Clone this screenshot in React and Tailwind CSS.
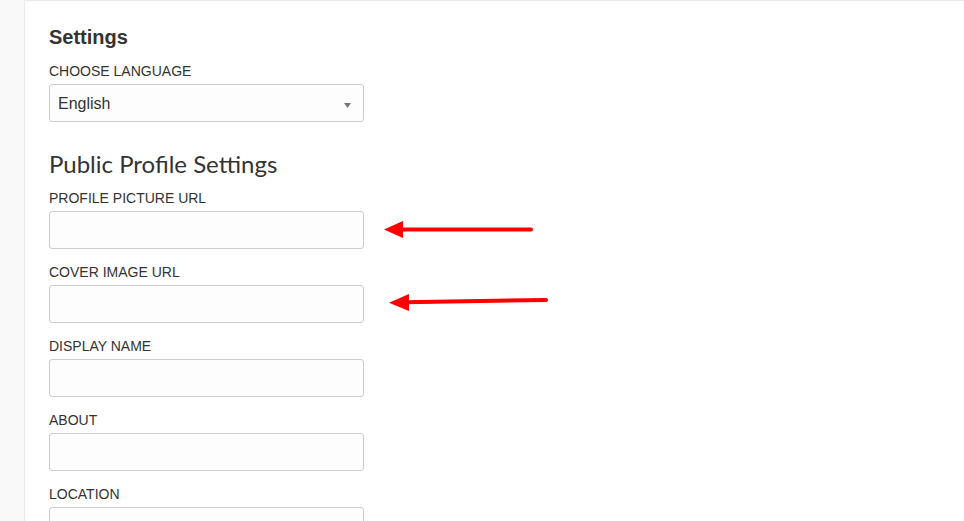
import React from 'react'

const fields = ['Profile Picture URL', 'Cover Image URL', 'Display Name', 'About', 'Location']

const Label = ({ children }) => (
  <label className="block text-[14px] leading-[18px] uppercase text-[#333] mb-[4px]">
    {children}
  </label>
)

const TextInput = () => (
  <input
    type="text"
    className="block w-[315px] h-[38px] border border-[#cccccc] rounded-[3px] bg-[#fdfdfd] px-[9px] outline-none"
  />
)

// red annotation arrows drawn over the form
const Arrows = () => (
  <svg
    className="absolute left-0 top-0 pointer-events-none"
    width="964"
    height="521"
    viewBox="0 0 964 521"
  >
    <line x1="531" y1="229.5" x2="400" y2="229.5" stroke="#ff0000" strokeWidth="4" strokeLinecap="round" />
    <polygon points="384,229.5 403,221 403,238" fill="#ff0000" />
    <line x1="546" y1="300" x2="405" y2="302.3" stroke="#ff0000" strokeWidth="4" strokeLinecap="round" />
    <polygon points="389,302.8 409,294 409,311" fill="#ff0000" />
  </svg>
)

export default function App() {
  return (
    <div className="relative flex h-[521px] w-[964px] overflow-hidden bg-white font-['Liberation_Sans',Arial,sans-serif]">
      <div className="w-[25px] shrink-0 bg-[#f9f9f9] border-r border-[#ebebeb]" />
      <div className="flex-1 border-t border-[#ebebeb] pl-[24px] pt-[25px]">
        <h2 className="text-[20px] leading-[22px] font-bold text-[#333]">Settings</h2>

        <div className="mt-[14px]">
          <Label>Choose Language</Label>
          <div className="relative w-[315px] h-[38px] border border-[#cccccc] rounded-[3px] bg-[#fdfdfd] flex items-center pl-[8px] pt-[1px]">
            <span className="text-[16px] text-[#333]">English</span>
            <svg className="absolute right-[12px] top-[18px]" width="7" height="5" viewBox="0 0 7 5">
              <polygon points="0,0 7,0 3.5,5" fill="#777" />
            </svg>
          </div>
        </div>

        <h3 className="mt-[28px] mb-[11px] text-[24px] leading-[28px] text-[#333] font-['Lato',sans-serif]">
          Public Profile Settings
        </h3>

        {fields.map((f, i) => (
          <div key={f} className={i === 0 ? '' : 'mt-[14px]'}>
            <Label>{f}</Label>
            <TextInput />
          </div>
        ))}
      </div>
      <Arrows />
    </div>
  )
}
